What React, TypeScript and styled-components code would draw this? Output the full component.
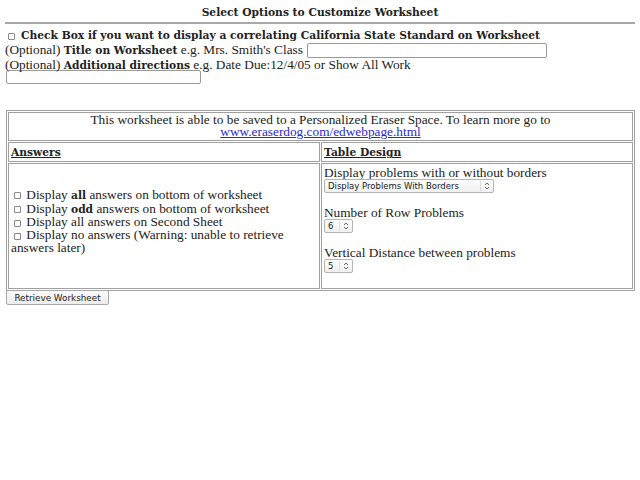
import React from 'react'
import styled, { createGlobalStyle } from 'styled-components'

// The regular weight of DejaVu Serif is not installed here, so plain text
// uses Liberation Serif at a size that keeps the same line widths.
const GlobalStyle = createGlobalStyle`
  body {
    margin: 5px;
    background: #ffffff;
    color: #222222;
    font-family: 'Liberation Serif', serif;
    font-size: 13.3px;
    line-height: 13px;
  }
`

// Styled Components
const Strong = styled.b`
  font-family: 'DejaVu Serif', serif;
  font-size: 10.7px;
  font-weight: bold;
  line-height: 1;
`
const Title = styled.h4`
  margin: 0;
  text-align: center;
  line-height: 13px;
`
const Rule = styled.hr`
  margin: 3px 0 6px;
  border: none;
  border-top: 2px solid #a8a8a8;
`
const Line = styled.div`
  display: flex;
  align-items: center;
  gap: 4px;
  min-height: 13px;
`
const Box = styled.input.attrs({ type: 'checkbox' })`
  appearance: none;
  box-sizing: border-box;
  margin: 0 2px 0 3px;
  width: 7px;
  height: 7px;
  vertical-align: middle;
  border: 1px solid #8a8a8a;
  border-radius: 1px;
  background: #ffffff;
`
const TextInput = styled.input.attrs({ type: 'text' })<{ $w: number }>`
  display: block;
  width: ${(p) => p.$w}px;
  height: 15px;
  box-sizing: border-box;
  margin: 0;
  border: 1px solid #9a9a9a;
  border-radius: 2px;
  padding: 0 3px;
  font-size: 9px;
`
const DirectionsInput = styled(TextInput)`
  height: 14px;
  margin: -1px 0 0 1px;
`
const Sheet = styled.table`
  margin: 26px 0 0 1px;
  width: 629px;
  border: 1px solid #a0a0a0;
  border-spacing: 1px;
`
const Cell = styled.td<{ $half?: boolean }>`
  border: 1px solid #a0a0a0;
  padding: 2px;
  vertical-align: top;
  line-height: 13px;
  width: ${(p) => (p.$half ? '50%' : 'auto')};
`
const InfoCell = styled(Cell)`
  padding: 1px 2px 2px;
  line-height: 12px;
  text-align: center;
`
const Heading = styled(Strong)`
  text-decoration: underline;
`
const AnswersCell = styled(Cell)`
  vertical-align: middle;
  padding: 2px 2px 12px 2px;
`
const Link = styled.a`
  color: #2a2acc;
`
const Field = styled.div`
  margin-bottom: 13px;
`
const SelectWrap = styled.div<{ $w: number }>`
  position: relative;
  width: ${(p) => p.$w}px;
  height: 14px;
`
const Select = styled.select`
  appearance: none;
  display: block;
  box-sizing: border-box;
  width: 100%;
  height: 100%;
  margin: 0;
  padding: 0 0 0 3px;
  font-family: 'DejaVu Sans', sans-serif;
  font-size: 8.5px;
  color: #222222;
  background: linear-gradient(#fdfdfd, #f0f0f0);
  border: 1px solid #b4b4b4;
  border-radius: 2px;
`
const Arrow = styled.span`
  position: absolute;
  top: 2px;
  right: 1px;
  bottom: 2px;
  width: 12px;
  display: flex;
  align-items: center;
  justify-content: center;
  border-left: 1px solid #dddddd;
  pointer-events: none;
`
const Button = styled.button`
  display: block;
  margin: -1px 0 0 1px;
  height: 15px;
  width: 103px;
  padding: 0;
  font-family: 'DejaVu Sans', sans-serif;
  font-size: 8.8px;
  color: #222222;
  background: linear-gradient(#fbfbfb, #ececec);
  border: 1px solid #a8a8a8;
  border-radius: 2px;
`

const UpDown: React.FC = () => (
  <svg width="6" height="8" viewBox="0 0 6 8" fill="none" stroke="#555555" strokeWidth="0.9">
    <path d="M1 3 L3 1 L5 3" />
    <path d="M1 5 L3 7 L5 5" />
  </svg>
)

const Dropdown: React.FC<{ width: number; value: string }> = ({ width, value }) => (
  <SelectWrap $w={width}>
    <Select>
      <option>{value}</option>
    </Select>
    <Arrow>
      <UpDown />
    </Arrow>
  </SelectWrap>
)

const App: React.FC = () => {
  return (
    <>
      <GlobalStyle />
      <Title>
        <Strong>Select Options to Customize Worksheet</Strong>
      </Title>
      <Rule />
      <Line>
        <Box />
        <Strong>Check Box if you want to display a correlating California State Standard on Worksheet</Strong>
      </Line>
      <Line>
        <span>
          (Optional) <Strong>Title on Worksheet</Strong> e.g. Mrs. Smith's Class
        </span>
        <TextInput $w={240} />
      </Line>
      <Line>
        <span>
          (Optional) <Strong>Additional directions</Strong> e.g. Date Due:12/4/05 or Show All Work
        </span>
      </Line>
      <DirectionsInput $w={195} />

      <Sheet>
        <tbody>
          <tr>
            <InfoCell colSpan={2}>
              This worksheet is able to be saved to a Personalized Eraser Space. To learn more go to
              <br />
              <Link href="#">www.eraserdog.com/edwebpage.html</Link>
            </InfoCell>
          </tr>
          <tr>
            <Cell $half>
              <Heading>Answers</Heading>
            </Cell>
            <Cell>
              <Heading>Table Design</Heading>
            </Cell>
          </tr>
          <tr>
            <AnswersCell>
              <Box /> Display <Strong>all</Strong> answers on bottom of worksheet
              <br />
              <Box /> Display <Strong>odd</Strong> answers on bottom of worksheet
              <br />
              <Box /> Display all answers on Second Sheet
              <br />
              <Box /> Display no answers (Warning: unable to retrieve answers later)
            </AnswersCell>
            <Cell>
              <Field>
                Display problems with or without borders
                <Dropdown width={170} value="Display Problems With Borders" />
              </Field>
              <Field>
                Number of Row Problems
                <Dropdown width={29} value="6" />
              </Field>
              <Field>
                Vertical Distance between problems
                <Dropdown width={29} value="5" />
              </Field>
            </Cell>
          </tr>
        </tbody>
      </Sheet>
      <Button>Retrieve Worksheet</Button>
    </>
  )
}
export default App
